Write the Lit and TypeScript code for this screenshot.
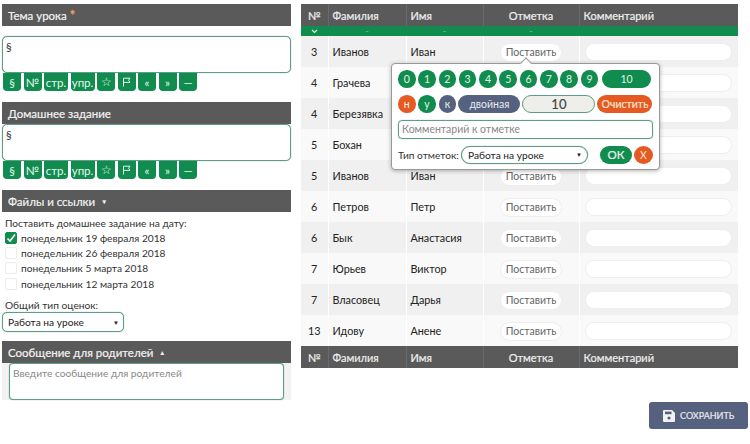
import { LitElement, html, css, svg } from "lit";
import { customElement } from "lit/decorators.js";

const rows: [string, string, string][] = [
  ["3", "Иванов", "Иван"],
  ["4", "Грачева", ""],
  ["4", "Березявка", ""],
  ["5", "Бохан", ""],
  ["5", "Иванов", "Иван"],
  ["6", "Петров", "Петр"],
  ["6", "Бык", "Анастасия"],
  ["7", "Юрьев", "Виктор"],
  ["7", "Власовец", "Дарья"],
  ["13", "Идову", "Анене"],
];
const flag = svg`<svg width="9" height="10" viewBox="0 0 9 10"><path d="M1.5 9.5V1.2H8L6.6 3.2 8 5.4H1.5" fill="none" stroke="#e8f5ee" stroke-width="1"/></svg>`;
const tools = ["§", "№", "стр.", "упр.", "☆", flag, "«", "»", "—"];
const dates = ["понедельник 19 февраля 2018", "понедельник 26 февраля 2018", "понедельник 5 марта 2018", "понедельник 12 марта 2018"];

@customElement("app-root")
export class AppRoot extends LitElement {
  static styles = css`
    :host { display: block; width: 750px; height: 444px; position: relative; overflow: hidden; background: #fff;
      font-family: Lato, "Noto Sans", sans-serif; font-size: 11px; color: #333; }
    * { box-sizing: border-box; }
    .page { display: grid; grid-template-columns: 289px 437px; column-gap: 10px; padding: 4px 0 0 2px; }
    .head { height: 22px; background: #5a5a5a; color: #f2f2f2; display: flex; align-items: center; padding-left: 6px; font-size: 11.5px; -webkit-text-stroke: 0.2px #f2f2f2; }
    .star { color: #e8a060; -webkit-text-stroke: 0.3px #e8a060; margin-left: 3px; font-size: 13px; }
    .tri { margin-left: 6px; font-size: 6px; }
    .ta { height: 37px; border: 1px solid #5d9c86; box-shadow: 0 0 1px #5d9c86; border-radius: 5px; background: #fff; padding: 3px 3px; font-size: 11.5px; }
    .first { margin-top: 10px; }
    .tools { display: flex; gap: 2.5px; height: 18px; margin: 0 0 11px 1px; }
    .tools span { background: #0f8c4e; color: #e8f5ee; border-radius: 0 0 4px 4px; width: 18px; display: flex; justify-content: center; align-items: center; font-size: 11.5px; }
    .tools .w { width: 24px; }
    .hw { padding: 4px 3px 0; font-size: 10.2px; line-height: 14px; color: #333; }
    .check { display: flex; align-items: center; height: 15.3px; gap: 4px; }
    .box { width: 12px; height: 12px; border: 1px solid #ececec; border-radius: 2px; background: #fff; display: flex; align-items: center; justify-content: center; flex: none; }
    .box.on { background: #0f8c4e; border-color: #0f8c4e; }
    .label { margin-top: 7px; font-size: 10.2px; line-height: 14px; padding-left: 3px; }
    .sel { display: flex; align-items: center; justify-content: space-between; border: 1px solid #5d9c86; box-shadow: 0 0 1px #5d9c86; border-radius: 5px; background: #fff; font-size: 10.2px; color: #222; }
    .sel i { font-style: normal; font-size: 6px; }
    .sel1 { width: 122px; height: 20px; padding: 0 4px 0 5px; margin-bottom: 9px; }
    .msg { background: #f2f2f2; padding: 0 7px; height: 37px; }
    .msg div { height: 37px; background: #fff; border: 1px solid #5d9c86; box-shadow: 0 0 1px #5d9c86; border-radius: 4px; padding: 3px; color: #888; font-size: 10.2px; }

    table { border-collapse: collapse; table-layout: fixed; width: 437px; }
    th { background: #5a5a5a; color: #eee; height: 22px; font-size: 11px; font-weight: 400; -webkit-text-stroke: 0.2px #eee; text-align: left; padding: 0 0 0 4px; border-left: 1px solid #6a6a6a; }
    th:first-child { border-left: 0; text-align: center; padding: 0; }
    th.c { text-align: center; padding: 0; }
    .green td { background: #0f8c4e; height: 10px; padding: 0; border: 0; color: #bfe6cf; font-size: 6px; line-height: 8px; text-align: center; }
    .green svg { display: block; margin: 0 auto; }
    td { height: 31px; padding: 0 0 0 4px; font-size: 10.8px; color: #222; border-left: 1px solid #fff; }
    td:first-child { border-left: 0; text-align: center; padding: 0; }
    tbody tr.row:nth-child(even) td { background: #f0f0f0; }
    tbody tr.row:nth-child(odd) td { background: #f9f9f9; }
    .put { display: block; width: 62px; height: 19px; margin: 1px auto 0; border: 1px solid #eee; border-radius: 10px; background: #fff; color: #666; font-size: 10.5px; line-height: 17px; text-align: center; }
    td.p { padding: 0; }
    td.k { padding: 0 6px 0 5px; }
    .cm { display: block; height: 18px; border: 1px solid #eee; border-radius: 9px; background: #fff; }

    .pop { position: absolute; left: 391px; top: 63px; width: 269px; height: 107px; background: #fff; border: 1px solid #999; border-radius: 4px; box-shadow: 0 1px 4px rgba(0,0,0,.3); padding: 6px; display: flex; flex-direction: column; gap: 7px; }
    .caret { position: absolute; left: 130px; top: -5px; width: 8px; height: 8px; background: #fff; border-left: 1px solid #999; border-top: 1px solid #999; transform: rotate(45deg); }
    .r { display: flex; align-items: center; height: 18px; flex: none; }
    .n { width: 17.5px; height: 17.5px; border-radius: 50%; background: #0f8c4e; color: #e3f4ea; display: flex; align-items: center; justify-content: center; font-size: 10.5px; margin-right: 2.8px; flex: none; }
    .n.w { width: 49px; border-radius: 9px; margin: 0 0 0 1px; }
    .n.o { background: #e55a22; }
    .n.b { background: #55617f; }
    .dbl { width: 62px; height: 18px; border-radius: 9px; background: #55617f; color: #e8e8ee; font-size: 10.5px; display: flex; align-items: center; justify-content: center; margin-left: -0.5px; }
    .val { width: 73px; height: 18px; border: 1px solid #5d9c86; border-radius: 9px; background: #eeeeea; margin-left: 2px; font-size: 13px; color: #444; -webkit-text-stroke: 0.2px #444; text-align: center; line-height: 16px; }
    .clr { width: 55px; height: 18px; border-radius: 9px; background: #e55a22; color: #f6e6d0; font-size: 10.5px; -webkit-text-stroke: 0.2px #f6e6d0; display: flex; align-items: center; justify-content: center; margin-left: 2px; }
    .inp { height: 18.5px; flex: none; width: 255px; border: 1px solid #5d9c86; box-shadow: 0 0 1px #5d9c86; border-radius: 4px; padding: 0 3px; font-size: 10.5px; line-height: 16.5px; color: #888; }
    .lab { font-size: 10.2px; color: #333; width: 63px; flex: none; }
    .sel2 { width: 127px; height: 18px; border-radius: 9px; padding: 0 5px 0 6px; }
    .ok { width: 32px; height: 18px; border-radius: 9px; background: #0f8c4e; color: #e8f5ee; font-size: 11.5px; -webkit-text-stroke: 0.2px #e8f5ee; display: flex; align-items: center; justify-content: center; margin-left: 12px; }
    .x { width: 19px; height: 18px; border-radius: 50%; background: #e55a22; color: #f6e6d0; font-size: 10.5px; display: flex; align-items: center; justify-content: center; margin-left: 2px; }

    .save { position: absolute; left: 649px; top: 402px; width: 99px; height: 27px; background: #55617f; border-radius: 3px; color: #e8e8ee; display: flex; align-items: center; padding-left: 14px; gap: 5px; font-size: 9px; -webkit-text-stroke: 0.2px #e8e8ee; }
  `;

  private head() {
    return html`<tr>
      <th style="width:27px">№</th><th style="width:78px">Фамилия</th><th style="width:77px">Имя</th><th class="c" style="width:96px">Отметка</th><th>Комментарий</th>
    </tr>`;
  }

  render() {
    const check = svg`<svg width="10" height="10" viewBox="0 0 10 10"><path d="M1.5 5.5 L4 8 L9 1.5" fill="none" stroke="#fff" stroke-width="1.6"/></svg>`;
    const save = svg`<svg width="12" height="12" viewBox="0 0 12 12"><path fill="#f2f2f2" d="M1 0h8l3 3v8a1 1 0 0 1-1 1H1a1 1 0 0 1-1-1V1a1 1 0 0 1 1-1z"/><rect x="2" y="1.6" width="6.5" height="2.6" fill="#55617f"/><circle cx="6" cy="8" r="1.6" fill="#55617f"/></svg>`;
    const chevron = svg`<svg width="7" height="5" viewBox="0 0 7 5"><path d="M1 1l2.5 2.5L6 1" fill="none" stroke="#e3f4ea" stroke-width="1.2"/></svg>`;
    const toolbar = html`<div class="tools">${tools.map((t) => html`<span class=${typeof t === "string" && t.length > 2 ? "w" : ""}>${t}</span>`)}</div>`;
    return html`
      <div class="page">
        <div>
          <div class="head">Тема урока <span class="star">*</span></div>
          <div class="ta first">§</div>
          ${toolbar}
          <div class="head">Домашнее задание</div>
          <div class="ta">§</div>
          ${toolbar}
          <div class="head">Файлы и ссылки <span class="tri">▼</span></div>
          <div class="hw">
            Поставить домашнее задание на дату:
            ${dates.map((d, i) => html`<div class="check"><span class="box ${i === 0 ? "on" : ""}">${i === 0 ? check : ""}</span>${d}</div>`)}
          </div>
          <div class="label">Общий тип оценок:</div>
          <div class="sel sel1">Работа на уроке <i>▼</i></div>
          <div class="head">Сообщение для родителей <span class="tri">▲</span></div>
          <div class="msg"><div>Введите сообщение для родителей</div></div>
        </div>
        <div>
          <table>
            <thead>${this.head()}</thead>
            <tbody>
              <tr class="green"><td>${chevron}</td><td>–</td><td>–</td><td>–</td><td></td></tr>
              ${rows.map((r) => html`<tr class="row">
                <td>${r[0]}</td><td>${r[1]}</td><td>${r[2]}</td>
                <td class="p"><span class="put">Поставить</span></td>
                <td class="k"><span class="cm"></span></td>
              </tr>`)}
              ${this.head()}
            </tbody>
          </table>
        </div>
      </div>
      <div class="pop">
        <div class="caret"></div>
        <div class="r">${[0, 1, 2, 3, 4, 5, 6, 7, 8, 9].map((n) => html`<span class="n">${n}</span>`)}<span class="n w">10</span></div>
        <div class="r"><span class="n o">н</span><span class="n">у</span><span class="n b">к</span><span class="dbl">двойная</span><span class="val">10</span><span class="clr">Очистить</span></div>
        <div class="inp">Комментарий к отметке</div>
        <div class="r"><span class="lab">Тип отметок:</span><span class="sel sel2">Работа на уроке <i>▼</i></span><span class="ok">ОК</span><span class="x">Х</span></div>
      </div>
      <div class="save">${save}СОХРАНИТЬ</div>
    `;
  }
}
